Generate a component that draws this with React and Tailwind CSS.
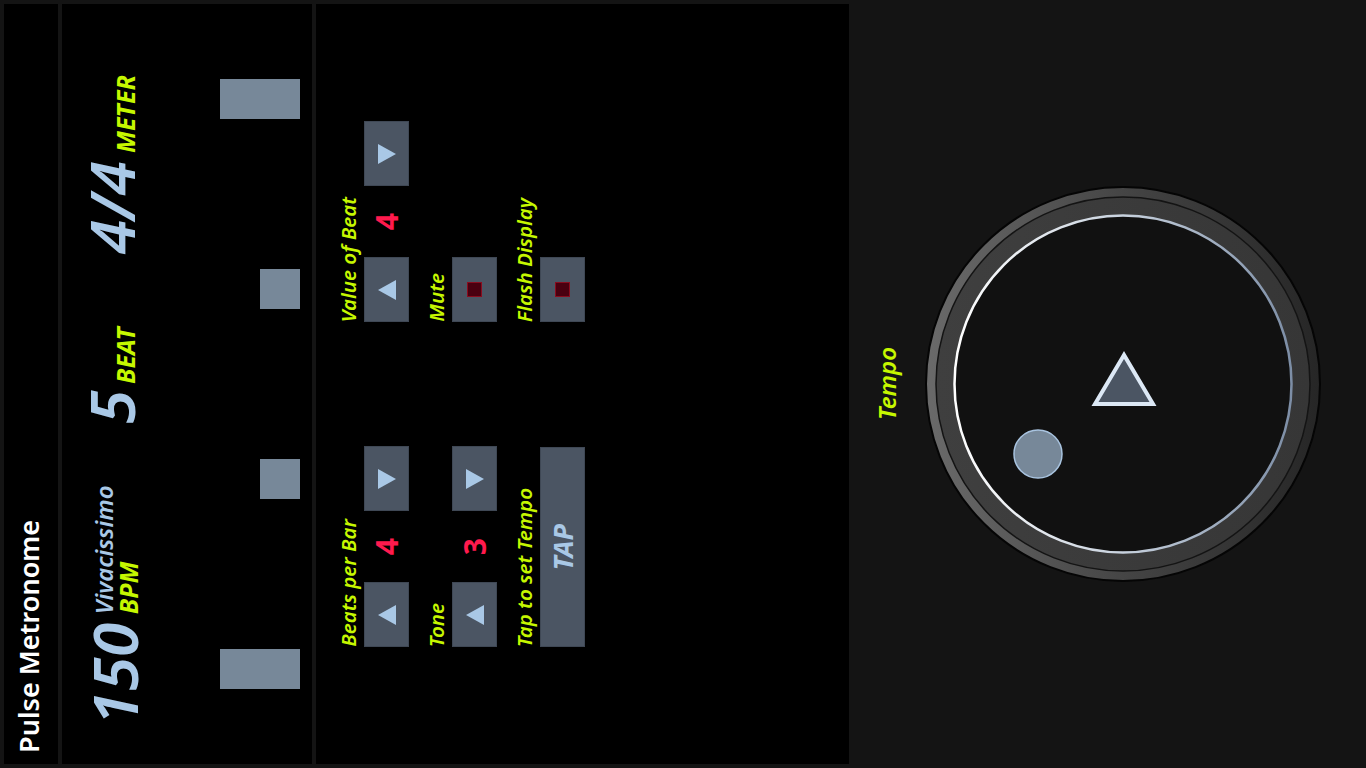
import React from 'react'

const GREEN = 'text-[#c6f700]'
const BLUE = 'text-[#a9c8e6]'

// text that reads bottom-to-top, like the rest of this sideways layout
function Side({ className = '', children }) {
  return (
    <div className={`[writing-mode:vertical-rl] [text-orientation:sideways] rotate-180 whitespace-nowrap ${className}`}>
      {children}
    </div>
  )
}

function Tri({ dir }) {
  return (
    <svg width="18" height="20" viewBox="0 0 18 20">
      {dir === 'right'
        ? <polygon points="0,0 18,10 0,20" fill="#a9c8e6" />
        : <polygon points="18,0 0,10 18,20" fill="#a9c8e6" />}
    </svg>
  )
}

function Btn({ children, tall }) {
  return (
    <div className={`w-[45px] ${tall ? 'h-[200px]' : 'h-[65px]'} bg-[#4b5563] border border-[#3f4855] flex items-center justify-center`}>
      {children}
    </div>
  )
}

function Stop() {
  return <div className="w-[15px] h-[15px] bg-[#4a0010] border border-[#8a0c1e]" />
}

function Label({ children }) {
  return (
    <Side className={`self-end text-[20.5px] leading-[20px] italic font-semibold ${GREEN}`}>{children}</Side>
  )
}

function Value({ children }) {
  return (
    <div className="h-[71px] flex items-center justify-center">
      <Side className="text-[30px] leading-[30px] font-bold text-[#ff1a4d]">{children}</Side>
    </div>
  )
}

function Stepper({ value }) {
  return (
    <div className="w-[45px] h-[201px] flex flex-col">
      <Btn><Tri dir="right" /></Btn>
      <Value>{value}</Value>
      <Btn><Tri dir="left" /></Btn>
    </div>
  )
}

function Dial() {
  return (
    <svg width="400" height="400" viewBox="0 0 400 400">
      <defs>
        <linearGradient id="outerBand" x1="0" y1="0" x2="1" y2="0">
          <stop offset="0" stopColor="#6a6a6a" />
          <stop offset="0.5" stopColor="#454545" />
          <stop offset="1" stopColor="#262626" />
        </linearGradient>
        <linearGradient id="innerBand" x1="0" y1="0" x2="1" y2="0">
          <stop offset="0" stopColor="#3f3f3f" />
          <stop offset="1" stopColor="#363636" />
        </linearGradient>
        <linearGradient id="rim" x1="0" y1="0" x2="1" y2="0">
          <stop offset="0" stopColor="#ffffff" />
          <stop offset="0.5" stopColor="#c8d2de" />
          <stop offset="1" stopColor="#7d8ea6" />
        </linearGradient>
      </defs>
      <circle cx="200" cy="200" r="197" fill="url(#outerBand)" stroke="#050505" strokeWidth="2" />
      <circle cx="200" cy="200" r="187" fill="url(#innerBand)" stroke="#141414" strokeWidth="1.5" />
      <circle cx="200" cy="200" r="168.5" fill="#111111" stroke="url(#rim)" strokeWidth="2.5" />
      <polygon points="201,171 172,220 230,220" fill="#4b5563" stroke="#dce8f5" strokeWidth="4" />
      <circle cx="115" cy="270" r="24" fill="#778899" stroke="#a9c4e0" strokeWidth="1.5" />
    </svg>
  )
}

export default function App() {
  return (
    <div className="w-[1366px] h-[768px] bg-[#141414] flex p-1 gap-1 overflow-hidden font-['Noto_Sans',sans-serif]">
      {/* title */}
      <div className="w-[54px] h-[760px] bg-black flex flex-col justify-end items-start pl-[12px] pb-[11px]">
        <Side className="text-[27px] leading-[26px] font-semibold text-white">Pulse Metronome</Side>
      </div>

      {/* readouts + beat bars */}
      <div className="w-[250px] h-[760px] bg-black flex justify-between">
        <div className="ml-[26px] w-[67px] flex flex-col">
          <div className="h-[256px] flex flex-col justify-end items-end pb-[6px]">
            <Side className={`text-[62px] leading-[60px] italic font-semibold ${BLUE}`}>
              4/4<span className={`ms-2 text-[25px] font-bold ${GREEN}`}>METER</span>
            </Side>
          </div>
          <div className="h-[170px] flex flex-col justify-end items-end pb-[6px]">
            <Side className={`text-[62px] leading-[60px] italic font-semibold ${BLUE}`}>
              5<span className={`ms-1.5 text-[25px] font-bold ${GREEN}`}>BEAT</span>
            </Side>
          </div>
          <div className="flex-1 flex flex-col justify-end items-end pb-[39px] pr-[11px]">
            <Side className={`text-[62px] leading-[60px] italic font-semibold ${BLUE}`}>
              150
              <span className="ms-2 inline-block text-[24px] leading-[25px]">
                <span className={`block font-semibold ${BLUE}`}>Vivacissimo</span>
                <span className={`block text-[25px] font-bold ${GREEN}`}>BPM</span>
              </span>
            </Side>
          </div>
        </div>
        <div className="mr-3 w-[80px] flex flex-col items-end pt-[75px] gap-[150px]">
          <div className="w-[80px] h-[40px] bg-[#778899]" />
          <div className="w-[40px] h-[40px] bg-[#778899]" />
          <div className="w-[40px] h-[40px] bg-[#778899]" />
          <div className="w-[80px] h-[40px] bg-[#778899]" />
        </div>
      </div>

      {/* settings */}
      <div className="w-[533px] h-[760px] bg-black flex flex-col pt-[117px] gap-[124px]">
        <div className="ml-[22px] h-[201px] flex">
          <Label>Value of Beat</Label>
          <div className="ml-[6px]"><Stepper value="4" /></div>
          <div className="ml-[17px] flex">
            <Label>Mute</Label>
            <div className="ml-[6px] self-end"><Btn><Stop /></Btn></div>
          </div>
          <div className="ml-[17px] flex">
            <Label>Flash Display</Label>
            <div className="ml-[6px] self-end"><Btn><Stop /></Btn></div>
          </div>
        </div>
        <div className="ml-[22px] h-[201px] flex">
          <Label>Beats per Bar</Label>
          <div className="ml-[6px]"><Stepper value="4" /></div>
          <div className="ml-[17px] flex">
            <Label>Tone</Label>
            <div className="ml-[6px]"><Stepper value="3" /></div>
          </div>
          <div className="ml-[17px] flex">
            <Label>Tap to set Tempo</Label>
            <div className="ml-[6px] self-end">
              <Btn tall>
                <Side className={`text-[27px] leading-[26px] italic font-bold ${BLUE}`}>TAP</Side>
              </Btn>
            </div>
          </div>
        </div>
      </div>

      {/* tempo dial */}
      <div className="flex-1 flex items-center">
        <Side className={`ml-[22px] text-[24px] leading-[24px] italic font-semibold ${GREEN}`}>Tempo</Side>
        <div className="ml-[24px]"><Dial /></div>
      </div>
    </div>
  )
}
